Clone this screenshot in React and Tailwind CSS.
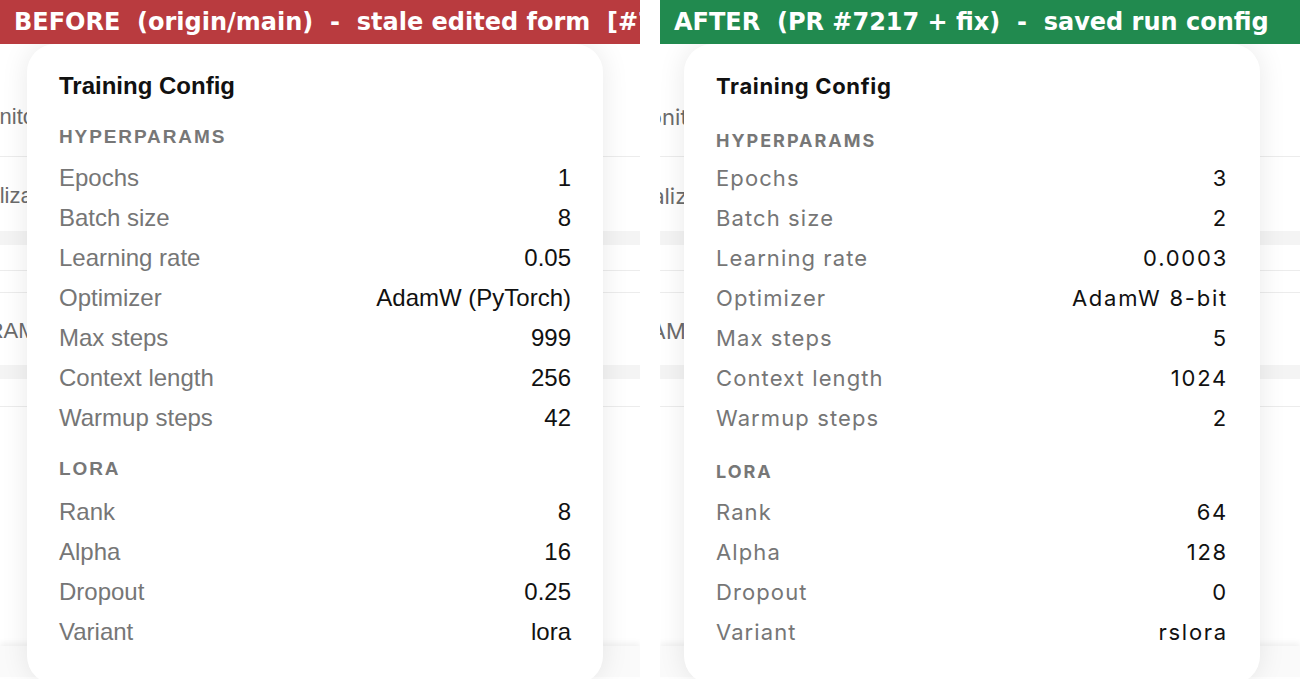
import React from "react";

const hyper = {
  before: [
    ["Epochs", "1"],
    ["Batch size", "8"],
    ["Learning rate", "0.05"],
    ["Optimizer", "AdamW (PyTorch)"],
    ["Max steps", "999"],
    ["Context length", "256"],
    ["Warmup steps", "42"],
  ],
  after: [
    ["Epochs", "3"],
    ["Batch size", "2"],
    ["Learning rate", "0.0003"],
    ["Optimizer", "AdamW 8-bit"],
    ["Max steps", "5"],
    ["Context length", "1024"],
    ["Warmup steps", "2"],
  ],
};

const lora = {
  before: [
    ["Rank", "8"],
    ["Alpha", "16"],
    ["Dropout", "0.25"],
    ["Variant", "lora"],
  ],
  after: [
    ["Rank", "64"],
    ["Alpha", "128"],
    ["Dropout", "0"],
    ["Variant", "rslora"],
  ],
};

// per-side look: the two captures were taken with different UI fonts
const themes = {
  before: {
    bar: "bg-[#b93b3f]",
    banner: "BEFORE  (origin/main)  -  stale edited form  [#7217]",
    font: "font-['Liberation_Sans',Arial,sans-serif]",
    cardPos: "left-[27px]",
    size: "text-[24px]",
    title: "",
    head: "text-[19px] tracking-[0.1em]",
    hyperHead: "mt-[25px] mb-[9px]",
    loraHead: "mt-[19px] mb-[11px]",
    key: "",
    value: "",
    shift: ["-ml-[31px]", "-ml-[55px]", "-ml-[40px]"],
  },
  after: {
    bar: "bg-[#218a4f]",
    banner: "AFTER  (PR #7217 + fix)  -  saved run config",
    font: "font-['Inter',sans-serif]",
    cardPos: "left-[24px]",
    size: "text-[22px]",
    title: "tracking-[0.03em]",
    head: "text-[18px] tracking-[0.11em]",
    hyperHead: "mt-[29px] mb-[5px]",
    loraHead: "mt-[22px] mb-[8px]",
    key: "tracking-[0.05em]",
    value: "tracking-[0.08em]",
    shift: ["-ml-[31px]", "-ml-[53px]", "-ml-[51px]"],
  },
};

function Row({ label, value, t }) {
  return (
    <div className="flex h-10 items-center justify-between leading-[28px]">
      <span className={`text-[#767676] ${t.key}`}>{label}</span>
      <span className={`text-[#111] ${t.value}`}>{value}</span>
    </div>
  );
}

// the settings page that sits under the popover
function PageBehind({ t }) {
  return (
    <div className={`flex flex-col text-[22px] leading-[28px] text-[#6b6b6b] ${t.font}`}>
      <div className="h-[113px] border-b border-[#ececec] pt-[59px]">
        <span className={`block whitespace-nowrap ${t.shift[0]}`}>Monitoring</span>
      </div>
      <div className="h-[74px] pt-[25px]">
        <span className={`block whitespace-nowrap ${t.shift[1]}`}>Visualization</span>
      </div>
      <div className="h-[14px] bg-[#f4f4f4]" />
      <div className="h-[26px] border-b border-[#ececec]" />
      <div className="h-[22px] border-b border-[#ececec]" />
      <div className="h-[72px] pt-[24px]">
        <span className={`block whitespace-nowrap ${t.shift[2]}`}>PARAMS</span>
      </div>
      <div className="h-[14px] bg-[#f4f4f4]" />
      <div className="h-[28px] border-b border-[#ececec]" />
      <div className="h-[239px]" />
      <div className="h-[31px] bg-[#fafafa] shadow-[0_-3px_6px_rgba(0,0,0,0.06)]" />
    </div>
  );
}

function Panel({ side }) {
  const t = themes[side];
  return (
    <section className="relative h-[679px] w-[640px] shrink-0 overflow-hidden bg-white">
      <header
        className={`relative z-10 flex h-11 items-center px-[14px] font-['DejaVu_Sans',sans-serif] text-[24px] font-bold whitespace-pre text-white ${t.bar}`}
      >
        {t.banner}
      </header>

      <PageBehind t={t} />

      <div
        className={`absolute top-[44px] h-[640px] w-[576px] rounded-[28px] bg-white px-8 pt-7 shadow-[0_0_28px_rgba(0,0,0,0.09)] ${t.size} ${t.cardPos} ${t.font}`}
      >
        <h3 className={`leading-[28px] font-bold text-[#111] ${t.title}`}>Training Config</h3>

        <div className={`leading-6 font-bold text-[#777] ${t.head} ${t.hyperHead}`}>HYPERPARAMS</div>
        {hyper[side].map(([k, v]) => (
          <Row key={k} label={k} value={v} t={t} />
        ))}

        <div className={`leading-6 font-bold text-[#777] ${t.head} ${t.loraHead}`}>LORA</div>
        {lora[side].map(([k, v]) => (
          <Row key={k} label={k} value={v} t={t} />
        ))}
      </div>
    </section>
  );
}

export default function App() {
  return (
    <div className="flex h-[679px] w-[1300px] gap-5 overflow-hidden bg-white">
      <Panel side="before" />
      <Panel side="after" />
    </div>
  );
}
